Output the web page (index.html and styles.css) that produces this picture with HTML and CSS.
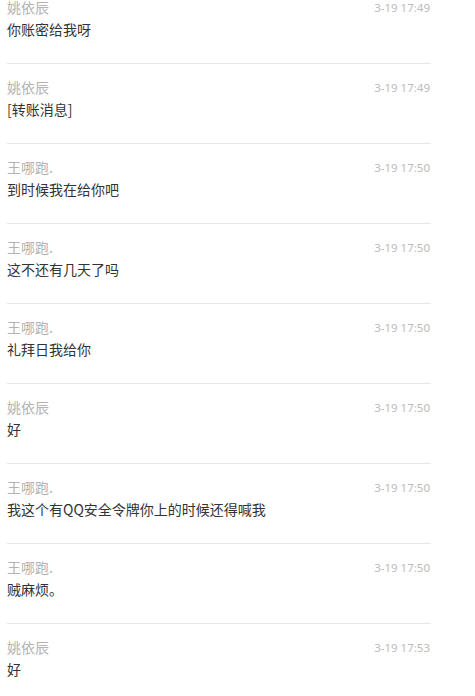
FILE: index.html
```html
<!DOCTYPE html>
<html lang="zh-CN">
<head>
<meta charset="utf-8">
<link rel="stylesheet" href="styles.css">
</head>
<body>
<ul class="msg-list">
  <li class="msg"><div class="msg-head"><span class="name">姚依辰</span><span class="time">3-19 17:49</span></div><div class="text">你账密给我呀</div></li>
  <li class="msg"><div class="msg-head"><span class="name">姚依辰</span><span class="time">3-19 17:49</span></div><div class="text">[转账消息]</div></li>
  <li class="msg"><div class="msg-head"><span class="name">王哪跑.</span><span class="time">3-19 17:50</span></div><div class="text">到时候我在给你吧</div></li>
  <li class="msg"><div class="msg-head"><span class="name">王哪跑.</span><span class="time">3-19 17:50</span></div><div class="text">这不还有几天了吗</div></li>
  <li class="msg"><div class="msg-head"><span class="name">王哪跑.</span><span class="time">3-19 17:50</span></div><div class="text">礼拜日我给你</div></li>
  <li class="msg"><div class="msg-head"><span class="name">姚依辰</span><span class="time">3-19 17:50</span></div><div class="text">好</div></li>
  <li class="msg"><div class="msg-head"><span class="name">王哪跑.</span><span class="time">3-19 17:50</span></div><div class="text">我这个有QQ安全令牌你上的时候还得喊我</div></li>
  <li class="msg"><div class="msg-head"><span class="name">王哪跑.</span><span class="time">3-19 17:50</span></div><div class="text">贼麻烦。</div></li>
  <li class="msg"><div class="msg-head"><span class="name">姚依辰</span><span class="time">3-19 17:53</span></div><div class="text">好</div></li>
</ul>
</body>
</html>
```

FILE: styles.css
```css
html, body {
  margin: 0;
  padding: 0;
  background: #fff;
  overflow: hidden;
}
body {
  font-family: "Microsoft YaHei", "Noto Sans CJK SC", "Noto Sans", sans-serif;
}
.msg-list {
  list-style: none;
  margin: -16px 0 0 7px;
  padding: 0;
  width: 424px;
}
.msg {
  height: 79px;
  border-bottom: 1px solid #e8e8e8;
  box-sizing: content-box;
  padding: 0;
  display: flex;
  flex-direction: column;
}
.msg-head {
  display: flex;
  justify-content: space-between;
  align-items: flex-start;
  padding-top: 13px;
  height: 20px;
}
.name {
  font-size: 14px;
  line-height: 20px;
  color: #b3b3b3;
}
.time {
  font-family: "Noto Sans", "Liberation Sans", sans-serif;
  font-size: 11.5px;
  line-height: 20px;
  margin-top: 1px;
  padding-right: 1px;
  color: #bbbbbb;
}
.text {
  margin-top: 2px;
  font-size: 14px;
  line-height: 20px;
  color: #333;
}
```
